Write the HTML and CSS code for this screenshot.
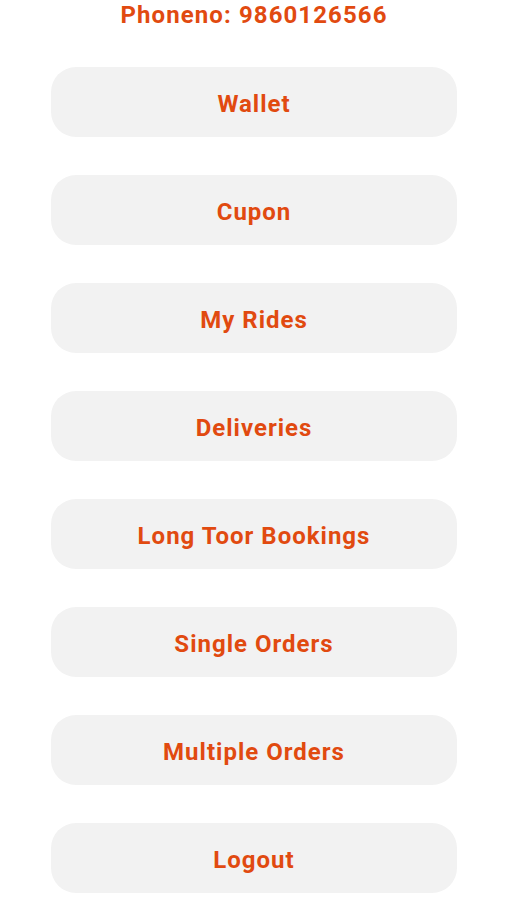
FILE: index.html
```html
<!DOCTYPE html>
<html lang="en">
<head>
  <meta charset="utf-8">
  <meta name="viewport" content="width=device-width, initial-scale=1">
  <title>Profile</title>
  <link rel="stylesheet" href="styles.css">
</head>
<body>
  <main class="profile">
    <p class="phone">Phoneno: 9860126566</p>

    <nav class="menu">
      <button class="menu-button">Wallet</button>
      <button class="menu-button">Cupon</button>
      <button class="menu-button">My Rides</button>
      <button class="menu-button">Deliveries</button>
      <button class="menu-button">Long Toor Bookings</button>
      <button class="menu-button">Single Orders</button>
      <button class="menu-button">Multiple Orders</button>
      <button class="menu-button">Logout</button>
    </nav>
  </main>
</body>
</html>
```

FILE: styles.css
```css
:root {
  --accent-color: #e14a10;
  --button-bg: #f2f2f2;
  --background-color: #ffffff;
}

* {
  margin: 0;
  padding: 0;
  box-sizing: border-box;
}

body {
  font-family: Roboto, sans-serif;
  background-color: var(--background-color);
}

.profile {
  display: flex;
  flex-direction: column;
  align-items: center;
  padding-left: 2px;
}

.phone {
  color: var(--accent-color);
  font-size: 24px;
  font-weight: 700;
  letter-spacing: 1.1px;
  line-height: 28px;
  padding-top: 1px;
  text-align: center;
}

.menu {
  width: 406px;
  margin-top: 38px;
  display: flex;
  flex-direction: column;
  gap: 38px;
}

.menu-button {
  height: 70px;
  padding-top: 3px;
  border: none;
  border-radius: 25px;
  background-color: var(--button-bg);
  color: var(--accent-color);
  font-family: Roboto, sans-serif;
  font-size: 24px;
  font-weight: 700;
  letter-spacing: 1px;
  cursor: pointer;
}
```
